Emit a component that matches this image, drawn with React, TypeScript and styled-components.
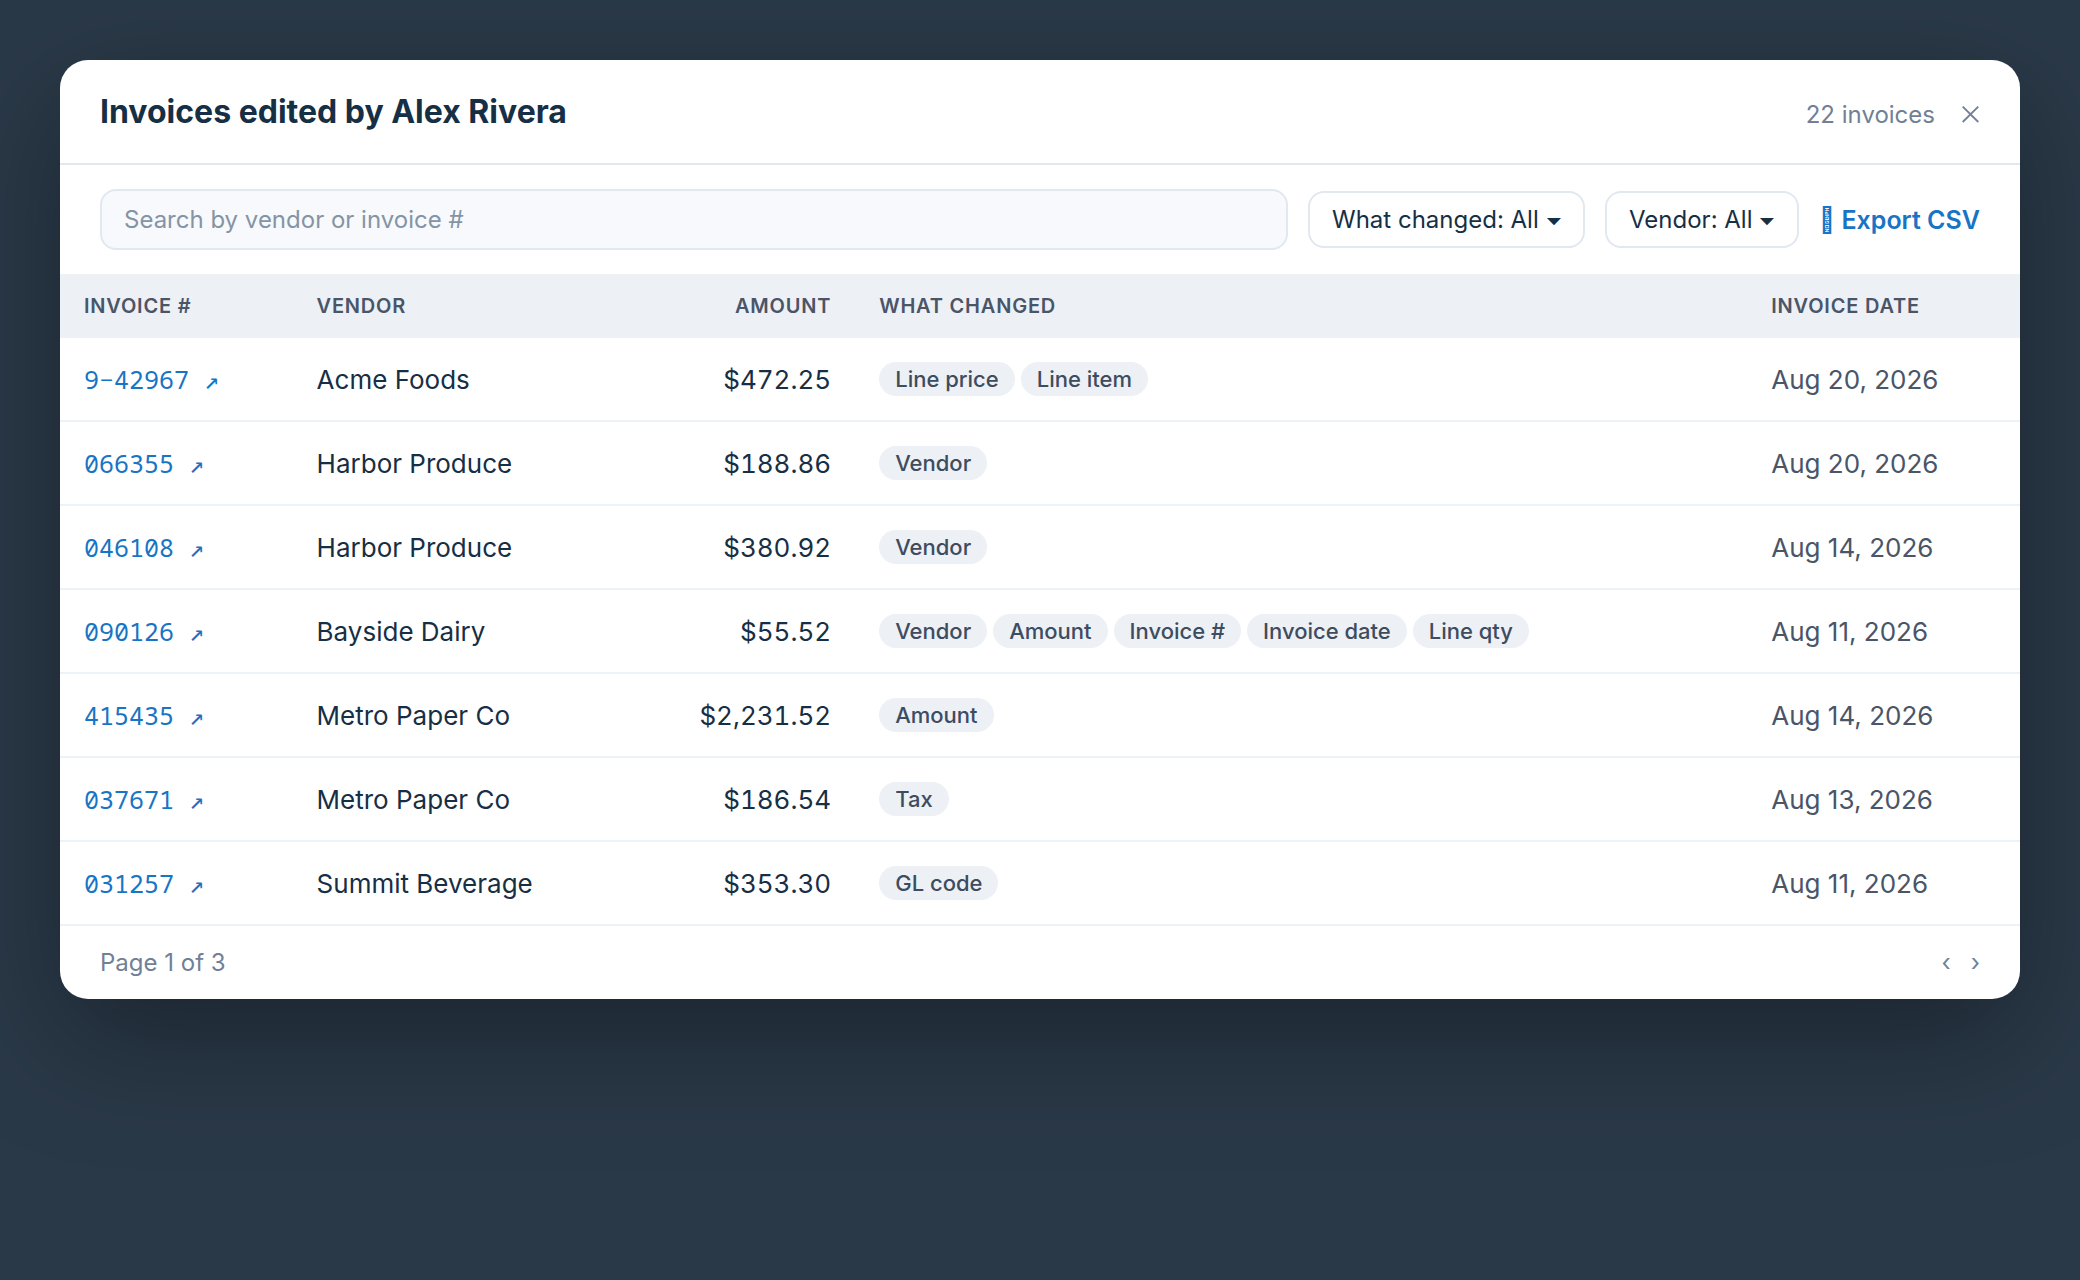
import React from 'react';
import styled, { createGlobalStyle } from 'styled-components';

const color = {
  backdrop: '#2a3948',
  ink: '#172f45',
  body: '#4a5568',
  chip: '#3d4c5f',
  muted: '#718096',
  placeholder: '#8594a5',
  link: '#1874c4',
  line: '#e2e8f0',
  rowLine: '#edf2f7',
  fill: '#edf0f5',
  field: '#f7f9fc',
};

const GlobalStyle = createGlobalStyle`
  *, *::before, *::after { box-sizing: border-box; }
  body {
    margin: 0;
    background: ${color.backdrop};
    color: ${color.ink};
    font-family: Inter, sans-serif;
    font-size: 26px;
  }
`;

const Page = styled.main`
  min-height: 1280px;
  padding: 60px;
  overflow: hidden;
`;

const Dialog = styled.section`
  background: #fff;
  border-radius: 28px;
  overflow: hidden;
  box-shadow: 0 40px 120px rgba(0, 0, 0, 0.35);
`;

const Header = styled.header`
  display: flex;
  align-items: baseline;
  justify-content: space-between;
  height: 105px;
  padding: 32px 40px;
  border-bottom: 2px solid ${color.line};
`;

const Title = styled.h2`
  margin: 0;
  font-size: 32px;
  font-weight: 700;
  line-height: 39px;
`;

const HeaderSide = styled.div`
  display: flex;
  align-items: baseline;
  gap: 27px;
  font-size: 24px;
  line-height: 29px;
  color: ${color.muted};
`;

const CloseButton = styled.button`
  display: block;
  padding: 0 1px 0 0;
  border: 0;
  background: none;
  color: inherit;
  line-height: 0;
`;

const Toolbar = styled.div`
  display: flex;
  align-items: center;
  gap: 20px;
  padding: 24px 40px;
  font-size: 24px;
  line-height: 29px;
`;

const Search = styled.input`
  flex: 1;
  min-width: 0;
  height: 61px;
  padding: 14px 22px;
  border: 2px solid ${color.line};
  border-radius: 16px;
  background: ${color.field};
  font: inherit;
  color: ${color.ink};
  &::placeholder { color: ${color.placeholder}; opacity: 1; }
`;

const Filter = styled.button`
  height: 57px;
  padding: 12px 22px;
  border: 2px solid ${color.line};
  border-radius: 16px;
  background: #fff;
  font: inherit;
  color: ${color.ink};
  white-space: pre;
`;

const Caret = styled.span`
  font-size: 20px;
  line-height: 1;
  letter-spacing: -0.5px;
`;

const ExportLink = styled.a`
  font-size: 25px;
  font-weight: 600;
  line-height: 30px;
  color: ${color.link};
`;

const Row = styled.div<{ $head?: boolean }>`
  display: grid;
  grid-template-columns: 232.6px 299.6px 263px 892.1px 272.7px;
  align-items: center;
  height: ${p => (p.$head ? 64 : 84)}px;
  ${p => p.$head
    ? `background: ${color.fill}; color: ${color.body}; font-size: 20px; font-weight: 600; letter-spacing: 0.8px; line-height: 24px;`
    : `border-bottom: 2px solid ${color.rowLine}; line-height: 32px;`}
`;

const Cell = styled.div<{ $right?: boolean; $soft?: boolean }>`
  padding: 0 24px;
  white-space: nowrap;
  text-align: ${p => (p.$right ? 'right' : 'left')};
  font-variant-numeric: ${p => (p.$right ? 'tabular-nums' : 'normal')};
  ${p => p.$soft && `color: ${color.body};`}
`;

const TextCell = styled(Cell)`
  padding-top: 2px;
`;

const InvoiceLink = styled.a`
  font-family: 'Noto Sans Mono', 'DejaVu Sans Mono', monospace;
  font-size: 25px;
  color: ${color.link};
`;

const Dash = styled.span`
  font-family: 'Source Code Pro', 'Noto Sans Mono', monospace;
`;

const Arrow = styled.span`
  font-family: 'DejaVu Sans Mono', monospace;
`;

const Chips = styled.div`
  display: flex;
  gap: 6px;
`;

const Chip = styled.span`
  padding: 4px 16px;
  border-radius: 20px;
  background: ${color.fill};
  color: ${color.chip};
  font-size: 22px;
  font-weight: 500;
  line-height: 26px;
`;

const Footer = styled.footer`
  display: flex;
  justify-content: space-between;
  padding: 22px 40px;
  font-size: 24px;
  line-height: 29px;
  color: ${color.muted};
`;

const Pager = styled.div`
  display: flex;
  gap: 20px;
`;

type Invoice = { id: string; vendor: string; amount: string; changed: string[]; date: string };

const invoices: Invoice[] = [
  { id: '9-42967', vendor: 'Acme Foods', amount: '$472.25', changed: ['Line price', 'Line item'], date: 'Aug 20, 2026' },
  { id: '066355', vendor: 'Harbor Produce', amount: '$188.86', changed: ['Vendor'], date: 'Aug 20, 2026' },
  { id: '046108', vendor: 'Harbor Produce', amount: '$380.92', changed: ['Vendor'], date: 'Aug 14, 2026' },
  { id: '090126', vendor: 'Bayside Dairy', amount: '$55.52', changed: ['Vendor', 'Amount', 'Invoice #', 'Invoice date', 'Line qty'], date: 'Aug 11, 2026' },
  { id: '415435', vendor: 'Metro Paper Co', amount: '$2,231.52', changed: ['Amount'], date: 'Aug 14, 2026' },
  { id: '037671', vendor: 'Metro Paper Co', amount: '$186.54', changed: ['Tax'], date: 'Aug 13, 2026' },
  { id: '031257', vendor: 'Summit Beverage', amount: '$353.30', changed: ['GL code'], date: 'Aug 11, 2026' },
];

function InvoiceId({ id }: { id: string }) {
  return (
    <InvoiceLink>
      {id.split('-').map((part, i) => (
        <React.Fragment key={i}>{i > 0 && <Dash>-</Dash>}{part}</React.Fragment>
      ))}{' '}
      <Arrow>↗</Arrow>
    </InvoiceLink>
  );
}

export default function App() {
  return (
    <>
      <GlobalStyle />
      <Page>
        <Dialog>
          <Header>
            <Title>Invoices edited by Alex Rivera</Title>
            <HeaderSide>
              <span>22 invoices</span>
              <CloseButton aria-label="Close">
                <svg width="17" height="17" viewBox="0 0 17 17" fill="none" stroke="currentColor" strokeWidth="1.8">
                  <path d="M0.7 0.6 16.3 16M16.3 0.6 0.7 16" />
                </svg>
              </CloseButton>
            </HeaderSide>
          </Header>
          <Toolbar>
            <Search placeholder="Search by vendor or invoice #" />
            <Filter>What changed: All <Caret>⏷</Caret></Filter>
            <Filter>Vendor: All <Caret>⏷</Caret></Filter>
            <ExportLink>{'\uF8FF'} Export CSV</ExportLink>
          </Toolbar>
          <Row $head>
            <Cell>INVOICE #</Cell>
            <Cell>VENDOR</Cell>
            <Cell $right>AMOUNT</Cell>
            <Cell>WHAT CHANGED</Cell>
            <Cell>INVOICE DATE</Cell>
          </Row>
          {invoices.map(inv => (
            <Row key={inv.id}>
              <TextCell><InvoiceId id={inv.id} /></TextCell>
              <TextCell>{inv.vendor}</TextCell>
              <TextCell $right>{inv.amount}</TextCell>
              <Cell><Chips>{inv.changed.map(c => <Chip key={c}>{c}</Chip>)}</Chips></Cell>
              <TextCell $soft>{inv.date}</TextCell>
            </Row>
          ))}
          <Footer>
            <span>Page 1 of 3</span>
            <Pager><span>‹</span><span>›</span></Pager>
          </Footer>
        </Dialog>
      </Page>
    </>
  );
}
